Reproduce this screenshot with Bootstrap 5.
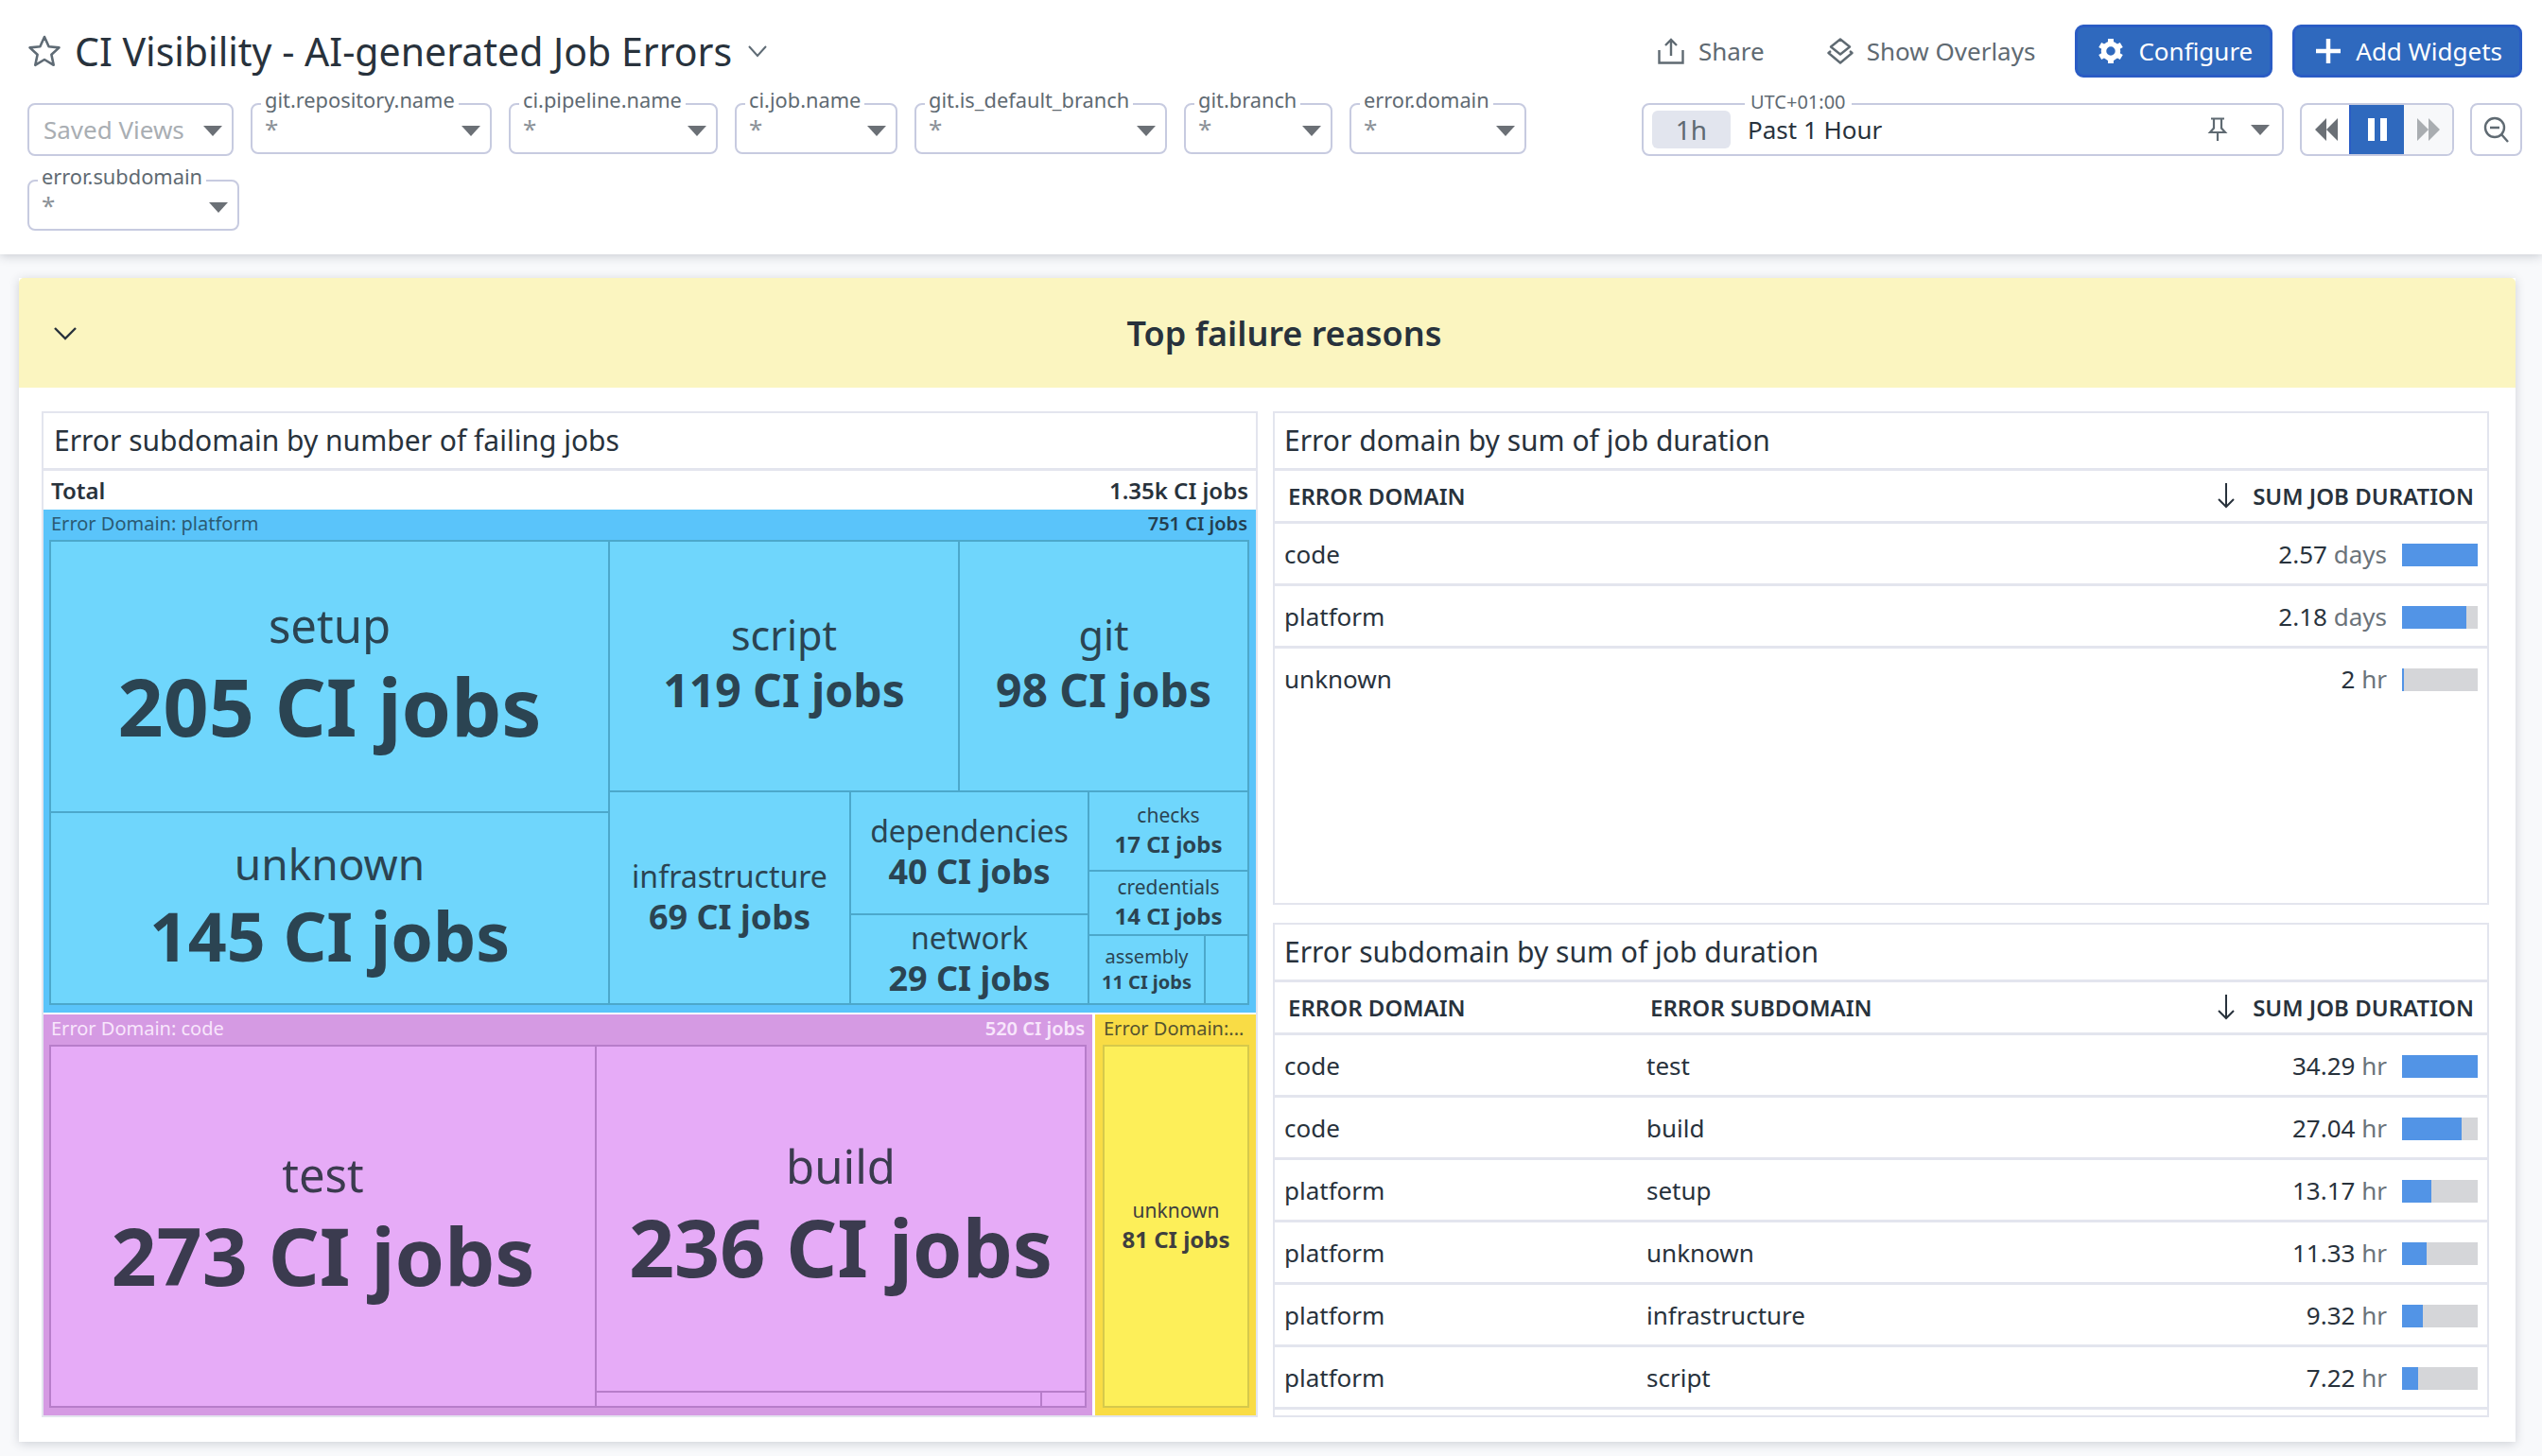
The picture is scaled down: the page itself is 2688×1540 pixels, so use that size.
<!DOCTYPE html>
<html lang="en">
<head>
<meta charset="utf-8">
<title>CI Visibility - AI-generated Job Errors</title>
<link href="https://cdn.jsdelivr.net/npm/bootstrap@5.3.0/dist/css/bootstrap.min.css" rel="stylesheet">
<style>
html,body{height:100%}
body{background:#f8f9fb;font-family:"Noto Sans",sans-serif;color:#28323c;overflow:hidden;width:2688px;height:1540px}
.topbar{height:269px;background:#fff;box-shadow:0 2px 10px rgba(40,50,70,.22);padding:26px 21px 0 29px;position:relative}
.leftpane{width:1640px}
.titlerow{height:56px;margin-bottom:27px}
.pagetitle{font-size:41px;font-weight:400;margin:0 0 0 14px;line-height:56px;color:#28323c;white-space:nowrap}
.filters{column-gap:18px;row-gap:25px;align-items:flex-start}
.fbox{position:relative;height:54px;border:2px solid #c7cbe0;border-radius:8px;background:#fff}
.fbox .flabel{position:absolute;left:9px;top:-20px;padding:0 4px;font-size:21.8px;line-height:30px;color:#5f6a72;white-space:nowrap;background:linear-gradient(to bottom,transparent 50%,#fff 50%)}
.fbox .star{position:absolute;left:13px;top:8px;font-size:26px;line-height:34px;color:#8b9298}
.fbox .caret{position:absolute;right:10px;top:22px}
.fbox.saved{height:56px}
.fbox.saved span{position:absolute;left:15px;top:8px;font-size:26px;line-height:36px;color:#a9aeb3}
.fb1{width:218px}.fb2{width:255px}.fb3{width:221px}.fb4{width:172px}.fb5{width:267px}.fb6{width:157px}.fb7{width:187px}.fb8{width:224px}
.rightpane{width:931px}
.actions{height:56px;margin-bottom:27px}
.act{font-size:26px;color:#5f6a72;display:flex;align-items:center;gap:15px;white-space:nowrap}
.act2{margin-left:65px;gap:13px}
.btn.dbtn{--bs-btn-bg:#2f69be;--bs-btn-border-color:#2a5cc4;--bs-btn-color:#fff;height:56px;font-size:26px;border-width:3px;border-radius:9px;display:flex;align-items:center;gap:15px;padding:0 18px 0 21px;line-height:1}
.btngap1{margin-left:42px}.btngap2{margin-left:21px}
.timebox{position:relative;width:679px;height:56px;border:2px solid #c7cbe0;border-radius:8px;display:flex;align-items:center;padding-left:9px}
.timebox .tz{position:absolute;left:107px;top:-18px;background:linear-gradient(to bottom,transparent 50%,#fff 50%);padding:0 6px;font-size:20px;line-height:30px;color:#5f6a72}
.chip{width:83px;height:40px;background:#e2e5ee;border-radius:6px;font-size:28px;color:#5f6a72;display:flex;align-items:center;justify-content:center;margin-right:18px}
.timetxt{font-size:26px;color:#28323c;flex-grow:1}
.pinic{margin-right:24px}.capic{margin-right:13px}
.ctrls{width:163px;height:56px;margin:0 17px;display:flex;border:2px solid #c7cbe0;border-radius:8px;overflow:hidden}
.ctrls>div{display:flex;align-items:center;justify-content:center}
.c1{width:52px}.c2{width:56px;background:#2f69be;box-shadow:0 0 0 2px #2a5cc4}.c3{flex-grow:1;background:#f7f8fa}
.zoomb{width:55px;height:56px;border:2px solid #c7cbe0;border-radius:8px;display:flex;align-items:center;justify-content:center}
.dash{width:2640px;height:1231px;margin:25px 0 0 20px;border:0;border-radius:0;background:#fff;box-shadow:0 2px 10px rgba(40,50,70,.2)}
.grouphead{height:116px;background:#fbf5c0;display:flex;align-items:center;justify-content:center;position:relative;border:0;border-radius:0;padding:1px 0 0 36px}
.grouphead svg{position:absolute;left:36px;top:51px}
.grouphead h2{font-size:36px;font-weight:600;margin:0;color:#28323c}
.dashbody{padding:25px 28px 0 24px;display:grid;grid-template-columns:1286px 1286px;column-gap:16px}
.wid{border:2px solid #e3e5ee;background:#fff;display:flex;flex-direction:column;overflow:hidden;position:relative}
.widtitle{height:61px;flex:none;border-bottom:3px solid #e3e5ee;font-size:30px;line-height:58px;padding-left:11px;color:#28323c;white-space:nowrap}
.rstack .widtitle{padding-left:10px}
.wleft{height:1064px}
.rstack{display:flex;flex-direction:column;gap:19px}
.wr1{height:522px}.wr2{height:523px}
.totalrow{height:41px;flex:none;display:flex;justify-content:space-between;align-items:center;padding:0 8px 0 8px;font-size:24px;font-weight:600;color:#28323c}
.tmgroup{display:flex;flex-direction:column;flex:none}
.gplat{height:532px;background:#5ac4fa;color:#2b5a73;padding:0 7px 8px 6px;margin-bottom:2px}
.gcode{width:1109px;height:424px;background:#d59ae3;color:#f8e6fc;padding:0 6px 8px 6px}
.gyel{width:170px;height:424px;background:#f9dc45;color:#55532f;padding:0 7px 8px 8px;margin-left:3px}
.ghead{height:32px;flex:none;display:flex;justify-content:space-between;align-items:center;font-size:20px;padding:0 2px 2px 2px;white-space:nowrap}
.gplat .ghead b{color:#243f50}
.ghead b{font-weight:600;color:inherit}
.gyel .ghead{padding-left:1px}
.inner{flex-grow:1;display:flex;border:1px solid;min-height:0}
.gplat .inner{border-color:#4ca8cb;background:#6fd6fc;color:#2b4452}
.gcode .inner{border-color:#b77dca;background:#e6abf7;color:#3b3b4f}
.gyel .inner{border-color:#d6c94b;background:#fdef59;color:#3f3f3f}
.gyel .inner,.gyel .cell{border-width:1.5px}
.cell{border-style:solid;border-width:1px;display:flex;flex-direction:column;align-items:center;justify-content:center;text-align:center;flex:none;white-space:nowrap}
.gplat .cell{border-color:#4ca8cb}
.gcode .cell{border-color:#b77dca}
.gyel .cell{border-color:#d6c94b}
.cc{display:flex;flex:none}
.cc.col{flex-direction:column;padding:0;width:auto}
.cell i{font-style:normal;display:block}
.cell b{font-weight:700;display:block}
.ls84 i{font-size:49px;line-height:62px}.ls84 b{font-size:84.2px;line-height:110px}
.ls71{padding-bottom:3px}.ls71 i{font-size:46px;line-height:60px}.ls71 b{font-size:71.6px;line-height:92px}
.ls48{padding-bottom:3px}.ls48 i{font-size:43px;line-height:54px}.ls48 b{font-size:48px;line-height:62px}
.ls36 i{font-size:32px;line-height:40px}.ls36 b{font-size:36px;line-height:46px}
.ls24{padding-bottom:3px}.ls24 i{font-size:21px;line-height:29px}.ls24 b{font-size:24px;line-height:31px}
.ls20 i{font-size:20px;line-height:26px}.ls20 b{font-size:20px;line-height:27px}
.buildcell{padding-bottom:2px}
.w591{width:591px}.w676{width:676px}.w370{width:370px}.w306{width:306px}.w255{width:255px}.w252{width:252px}.w169{width:169px}.w123{width:123px}.w46{width:46px}.w577{width:577px}.w518{width:518px}.w471{width:471px}.w47{width:47px}.wfull{width:100%}
.h287{height:287px}.h203{height:203px}.h265{height:265px}.h225{height:225px}.h130{height:130px}.h95{height:95px}.h84{height:84px}.h68{height:68px}.h73{height:73px}.h382{height:382px}.h366{height:366px}.h16{height:16px}
.table.dtable{margin:0;table-layout:fixed;border-collapse:separate;border-spacing:0;--bs-table-color:#28323c;--bs-table-border-color:#e3e5ee}
.dtable th{height:56px;border-bottom:3px solid #e3e5ee;font-size:24px;font-weight:600;text-transform:uppercase;vertical-align:middle;padding:0 0 0 14px;white-space:nowrap;color:#28323c}
.dtable td{height:66px;border-bottom:3px solid #e3e5ee;font-size:26px;vertical-align:middle;padding:2px 0 0 10px;white-space:nowrap}
.dtable .rgt{text-align:right;padding:2px 10px 0 0}
.dtable th.rgt{padding:0 14px 0 0}
.dtable .rgt svg{vertical-align:-4px;margin-right:18px}
.wr1 .dtable tbody tr:last-child td{border-bottom-color:transparent}
.valcell{display:flex;justify-content:flex-end;align-items:center;gap:16px}
.unit{color:#6b737a}
.barbg{width:80px;height:24px;background:#d5d6d9;flex:none}
.barfg{height:100%;background:#5294e6}
.fade{position:absolute;left:10px;right:10px;bottom:0;height:30px;background:linear-gradient(to bottom,rgba(255,255,255,0),rgba(190,195,205,.4))}
.colC{width:500px}
.cA{width:383px}
</style>
</head>
<body>
<header class="topbar d-flex justify-content-between">
  <div class="leftpane">
    <div class="titlerow d-flex align-items-center">
      <svg width="36" height="36" viewBox="0 0 36 36"><path d="M18 3l4.600 10.200 10.900 1.200-8.100 7.400 2.300 11L18 27l-9.700 5.800 2.300-11-8.100-7.400 10.900-1.200z" fill="none" stroke="#5f6b75" stroke-width="2.600" stroke-linejoin="round"/></svg>
      <h1 class="pagetitle">CI Visibility - AI-generated Job Errors</h1>
      <svg class="ms-3" width="22" height="14" viewBox="0 0 22 14"><path d="M2 2l9 10 9-10" fill="none" stroke="#5f6b75" stroke-width="2"/></svg>
    </div>
    <div class="filters d-flex flex-wrap">
      <div class="fbox saved fb1"><span>Saved Views</span><svg class="caret" width="20" height="11" viewBox="0 0 20 11"><path d="M0 0h20l-10 11z" fill="#6b7076"/></svg></div>
      <div class="fbox fb2"><span class="flabel">git.repository.name</span><span class="star">*</span><svg class="caret" width="20" height="11" viewBox="0 0 20 11"><path d="M0 0h20l-10 11z" fill="#6b7076"/></svg></div>
      <div class="fbox fb3"><span class="flabel">ci.pipeline.name</span><span class="star">*</span><svg class="caret" width="20" height="11" viewBox="0 0 20 11"><path d="M0 0h20l-10 11z" fill="#6b7076"/></svg></div>
      <div class="fbox fb4"><span class="flabel">ci.job.name</span><span class="star">*</span><svg class="caret" width="20" height="11" viewBox="0 0 20 11"><path d="M0 0h20l-10 11z" fill="#6b7076"/></svg></div>
      <div class="fbox fb5"><span class="flabel">git.is_default_branch</span><span class="star">*</span><svg class="caret" width="20" height="11" viewBox="0 0 20 11"><path d="M0 0h20l-10 11z" fill="#6b7076"/></svg></div>
      <div class="fbox fb6"><span class="flabel">git.branch</span><span class="star">*</span><svg class="caret" width="20" height="11" viewBox="0 0 20 11"><path d="M0 0h20l-10 11z" fill="#6b7076"/></svg></div>
      <div class="fbox fb7"><span class="flabel">error.domain</span><span class="star">*</span><svg class="caret" width="20" height="11" viewBox="0 0 20 11"><path d="M0 0h20l-10 11z" fill="#6b7076"/></svg></div>
      <div class="fbox fb8"><span class="flabel">error.subdomain</span><span class="star">*</span><svg class="caret" width="20" height="11" viewBox="0 0 20 11"><path d="M0 0h20l-10 11z" fill="#6b7076"/></svg></div>
    </div>
  </div>
  <div class="rightpane">
    <div class="actions d-flex align-items-center justify-content-end">
      <div class="act"><svg width="28" height="28" viewBox="0 0 28 28"><path d="M14 19V2M8 8l6-6 6 6M1.500 13v13.500h25V13" fill="none" stroke="#5f6a72" stroke-width="2.400"/></svg><span>Share</span></div>
      <div class="act act2"><svg width="30" height="28" viewBox="0 0 30 28"><path d="M15 1.500l10 8-10 8-10-8zM5 14l-2.500 2L15 26.500 27.500 16 25 14" fill="none" stroke="#5f6a72" stroke-width="2.400" stroke-linejoin="round"/></svg><span>Show Overlays</span></div>
      <button type="button" class="btn dbtn btngap1"><svg width="28" height="28" viewBox="0 0 28 28"><circle cx="14" cy="14" r="7.500" fill="none" stroke="#fff" stroke-width="5.500"/><g fill="#fff"><rect x="11" y="1" width="6" height="5"/><rect x="11" y="22" width="6" height="5"/><rect x="11" y="1" width="6" height="5" transform="rotate(60 14 14)"/><rect x="11" y="22" width="6" height="5" transform="rotate(60 14 14)"/><rect x="11" y="1" width="6" height="5" transform="rotate(-60 14 14)"/><rect x="11" y="22" width="6" height="5" transform="rotate(-60 14 14)"/></g></svg>Configure</button>
      <button type="button" class="btn dbtn btngap2"><svg width="28" height="28" viewBox="0 0 28 28"><path d="M14 1v26M1 14h26" stroke="#fff" stroke-width="4.500"/></svg>Add Widgets</button>
    </div>
    <div class="d-flex">
      <div class="timebox"><span class="tz">UTC+01:00</span><span class="chip">1h</span><span class="timetxt">Past 1 Hour</span>
        <svg class="pinic" width="22" height="26" viewBox="0 0 22 26"><path d="M4 1.500h14M7 1.500v10L3 16h16l-4-4.500v-10M11 16v9" fill="none" stroke="#5f6a72" stroke-width="2.200"/></svg>
        <svg class="capic" width="20" height="11" viewBox="0 0 20 11"><path d="M0 0h20l-10 11z" fill="#6b7076"/></svg>
      </div>
      <div class="ctrls">
        <div class="c1"><svg width="26" height="26" viewBox="0 0 26 26"><path d="M13 1v24L1 13zM25 1v24L13 13z" fill="#6b7076"/></svg></div>
        <div class="c2"><svg width="22" height="26" viewBox="0 0 22 26"><path d="M1 1h7v24H1zM14 1h7v24h-7z" fill="#fff"/></svg></div>
        <div class="c3"><svg width="26" height="26" viewBox="0 0 26 26"><path d="M1 1v24l12-12zM13 1v24l12-12z" fill="#a9adb1"/></svg></div>
      </div>
      <div class="zoomb"><svg width="28" height="28" viewBox="0 0 28 28"><circle cx="12" cy="12" r="10" fill="none" stroke="#5f6a72" stroke-width="2.400"/><path d="M7 12h10M19 19l7 8" fill="none" stroke="#5f6a72" stroke-width="2.400"/></svg></div>
    </div>
  </div>
</header>

<main class="card dash">
  <div class="card-header grouphead">
    <svg width="26" height="16" viewBox="0 0 26 16"><path d="M2 2l11 11L24 2" fill="none" stroke="#28323c" stroke-width="2.400"/></svg>
    <h2>Top failure reasons</h2>
  </div>
  <div class="dashbody">
    <section class="wid wleft">
      <div class="widtitle">Error subdomain by number of failing jobs</div>
      <div class="totalrow"><span>Total</span><span>1.35k CI jobs</span></div>
      <div class="tmgroup gplat">
        <div class="ghead"><span>Error Domain: platform</span><b>751 CI jobs</b></div>
        <div class="inner">
          <div class="cc col w591">
            <div class="cell ls84 w591 h287"><i>setup</i><b>205 CI jobs</b></div>
            <div class="cell ls71 w591 h203"><i>unknown</i><b>145 CI jobs</b></div>
          </div>
          <div class="cc col w676">
            <div class="cc h265">
              <div class="cell ls48 w370 h265"><i>script</i><b>119 CI jobs</b></div>
              <div class="cell ls48 w306 h265"><i>git</i><b>98 CI jobs</b></div>
            </div>
            <div class="cc h225">
              <div class="cell ls36 w255 h225"><i>infrastructure</i><b>69 CI jobs</b></div>
              <div class="cc col w252">
                <div class="cell ls36 w252 h130"><i>dependencies</i><b>40 CI jobs</b></div>
                <div class="cell ls36 w252 h95"><i>network</i><b>29 CI jobs</b></div>
              </div>
              <div class="cc col w169">
                <div class="cell ls24 w169 h84"><i>checks</i><b>17 CI jobs</b></div>
                <div class="cell ls24 w169 h68"><i>credentials</i><b>14 CI jobs</b></div>
                <div class="cc h73">
                  <div class="cell ls20 w123 h73"><i>assembly</i><b>11 CI jobs</b></div>
                  <div class="cell w46 h73"></div>
                </div>
              </div>
            </div>
          </div>
        </div>
      </div>
      <div class="d-flex">
        <div class="tmgroup gcode">
          <div class="ghead"><span>Error Domain: code</span><b>520 CI jobs</b></div>
          <div class="inner">
            <div class="cell ls84 w577 h382"><i>test</i><b>273 CI jobs</b></div>
            <div class="cc col w518">
              <div class="cell ls84 buildcell w518 h366"><i>build</i><b>236 CI jobs</b></div>
              <div class="cc h16"><div class="cell w471 h16"></div><div class="cell w47 h16"></div></div>
            </div>
          </div>
        </div>
        <div class="tmgroup gyel">
          <div class="ghead"><span>Error Domain:...</span></div>
          <div class="inner"><div class="cell ls24 wfull h382"><i>unknown</i><b>81 CI jobs</b></div></div>
        </div>
      </div>
    </section>

    <div class="rstack">
      <section class="wid wr1">
        <div class="widtitle">Error domain by sum of job duration</div>
        <table class="table dtable">
          <thead><tr><th>Error Domain</th><th class="rgt"><svg width="20" height="27" viewBox="0 0 20 27"><path d="M10 0v25M2 17l8 8 8-8" fill="none" stroke="#28323c" stroke-width="2"/></svg>Sum Job Duration</th></tr></thead>
          <tbody>
            <tr><td>code</td><td class="rgt"><div class="valcell"><span>2.57 <span class="unit">days</span></span><div class="barbg"><div class="barfg" style="width:100%"></div></div></div></td></tr>
            <tr><td>platform</td><td class="rgt"><div class="valcell"><span>2.18 <span class="unit">days</span></span><div class="barbg"><div class="barfg" style="width:85%"></div></div></div></td></tr>
            <tr><td>unknown</td><td class="rgt"><div class="valcell"><span>2 <span class="unit">hr</span></span><div class="barbg"><div class="barfg" style="width:3%"></div></div></div></td></tr>
          </tbody>
        </table>
      </section>
      <section class="wid wr2">
        <div class="widtitle">Error subdomain by sum of job duration</div>
        <table class="table dtable">
          <thead><tr><th class="cA">Error Domain</th><th>Error Subdomain</th><th class="rgt colC"><svg width="20" height="27" viewBox="0 0 20 27"><path d="M10 0v25M2 17l8 8 8-8" fill="none" stroke="#28323c" stroke-width="2"/></svg>Sum Job Duration</th></tr></thead>
          <tbody>
            <tr><td>code</td><td>test</td><td class="rgt"><div class="valcell"><span>34.29 <span class="unit">hr</span></span><div class="barbg"><div class="barfg" style="width:100%"></div></div></div></td></tr>
            <tr><td>code</td><td>build</td><td class="rgt"><div class="valcell"><span>27.04 <span class="unit">hr</span></span><div class="barbg"><div class="barfg" style="width:79%"></div></div></div></td></tr>
            <tr><td>platform</td><td>setup</td><td class="rgt"><div class="valcell"><span>13.17 <span class="unit">hr</span></span><div class="barbg"><div class="barfg" style="width:39%"></div></div></div></td></tr>
            <tr><td>platform</td><td>unknown</td><td class="rgt"><div class="valcell"><span>11.33 <span class="unit">hr</span></span><div class="barbg"><div class="barfg" style="width:33%"></div></div></div></td></tr>
            <tr><td>platform</td><td>infrastructure</td><td class="rgt"><div class="valcell"><span>9.32 <span class="unit">hr</span></span><div class="barbg"><div class="barfg" style="width:27%"></div></div></div></td></tr>
            <tr><td>platform</td><td>script</td><td class="rgt"><div class="valcell"><span>7.22 <span class="unit">hr</span></span><div class="barbg"><div class="barfg" style="width:21%"></div></div></div></td></tr>
          </tbody>
        </table>
        <div class="fade"></div>
      </section>
    </div>
  </div>
</main>
<script src="https://cdn.jsdelivr.net/npm/bootstrap@5.3.0/dist/js/bootstrap.bundle.min.js"></script>
</body>
</html>
